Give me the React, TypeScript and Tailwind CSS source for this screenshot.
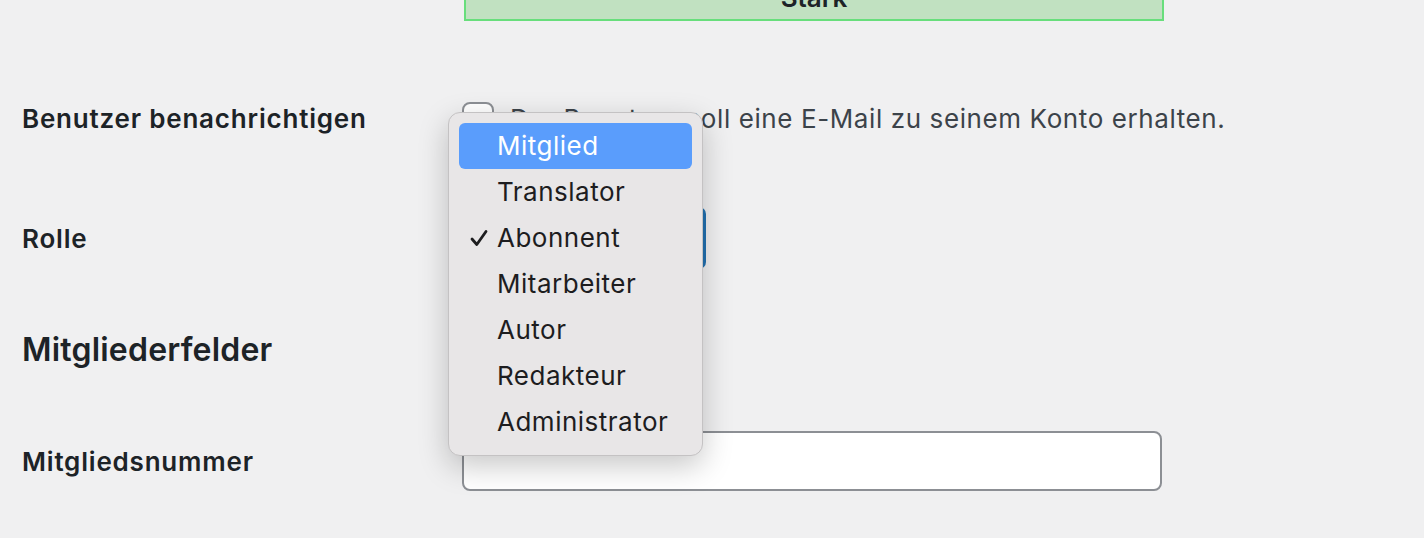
const roles = ['Mitglied', 'Translator', 'Abonnent', 'Mitarbeiter', 'Autor', 'Redakteur', 'Administrator'];

function RoleMenu() {
  return (
    <div className="absolute left-[448px] top-[112px] w-[255px] rounded-[12px] border border-[#c4c2c3] bg-[#e8e6e7] px-[10px] py-[10px] shadow-[0_10px_30px_rgba(0,0,0,0.22)]">
      {roles.map((role, i) => (
        <div
          key={role}
          className={
            i === 0
              ? 'relative flex h-[46px] items-center rounded-[6px] bg-[#5a9dfc] pl-[38px] text-white'
              : 'relative flex h-[46px] items-center pl-[38px] text-[#1d1d1f]'
          }
        >
          {role === 'Abonnent' && (
            <svg className="absolute left-[11px] top-[14px]" width="18" height="18" viewBox="0 0 18 18">
              <path d="M2 10 L6.8 15.5 L16 2.5" fill="none" stroke="#1d1d1f" strokeWidth="2.8" strokeLinecap="round" strokeLinejoin="round" />
            </svg>
          )}
          <span className="text-[26px] leading-none tracking-[0.5px]">{role}</span>
        </div>
      ))}
    </div>
  );
}

export default function App() {
  return (
    <div className="relative h-[538px] w-[1424px] overflow-hidden bg-[#f0f0f1] font-['Inter',sans-serif] text-[#1d2327]">
      {/* Passwortstärke */}
      <div className="ml-[464px] -mt-[41px] flex h-[62px] w-[700px] items-end justify-center border-2 border-[#68de7c] bg-[#c1e1c1] pb-[8px]">
        <span className="text-[26px] font-semibold leading-none">Stark</span>
      </div>

      {/* Benutzer benachrichtigen */}
      <div className="mt-[80px] flex h-[34px] items-center">
        <div className="w-[462px] pl-[22px] text-[26px] font-semibold tracking-[0.8px]">Benutzer benachrichtigen</div>
        <div className="flex items-center">
          <div className="h-[32px] w-[32px] rounded-[8px] border-2 border-[#8c8f94] bg-white" />
          <span className="ml-[16px] text-[26px] tracking-[0.6px] text-[#3c434a]">Der Benutzer soll eine E-Mail zu seinem Konto erhalten.</span>
        </div>
      </div>

      {/* Rolle */}
      <div className="mt-[72px] flex h-[62px] items-center">
        <div className="w-[462px] pl-[22px] text-[26px] font-semibold tracking-[0.8px]">Rolle</div>
        <div className="h-[62px] w-[244px] rounded-[7px] border-[3px] border-[#2271b1] bg-[#f6f6f7]" />
      </div>

      {/* Mitgliederfelder */}
      <div className="mt-[62px] pl-[22px] text-[32px] font-semibold leading-[38px] tracking-[0.2px]">Mitgliederfelder</div>

      {/* Mitgliedsnummer */}
      <div className="mt-[62px] flex h-[60px] items-center">
        <div className="w-[462px] pl-[22px] text-[26px] font-semibold tracking-[0.8px]">Mitgliedsnummer</div>
        <div className="h-[60px] w-[700px] rounded-[8px] border-2 border-[#8c8f94] bg-white" />
      </div>

      <RoleMenu />
    </div>
  );
}
